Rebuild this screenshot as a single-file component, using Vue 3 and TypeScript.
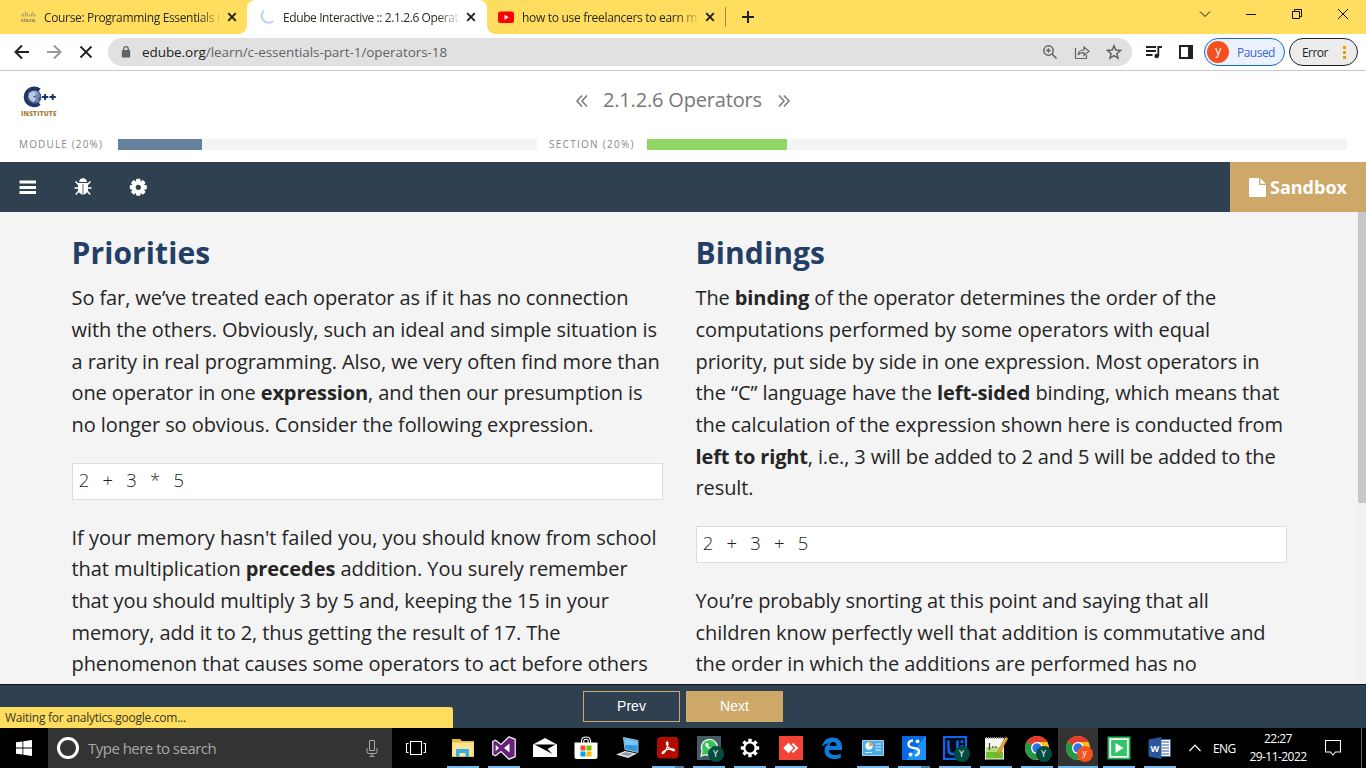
<script setup lang="ts">
interface Part { text: string; bold: boolean }

function parts(line: string): Part[] {
  return line.split('*').map((text, i) => ({ text, bold: i % 2 === 1 }))
}

// A line of body copy and its tracking in pixels
type Line = [string, number]
interface Column { title: string; intro: Line[]; code: string; rest: Line[] }

const columns: Column[] = [
  {
    title: 'Priorities',
    intro: [
      ['So far, we’ve treated each operator as if it has no connection', -0.09],
      ['with the others. Obviously, such an ideal and simple situation is', -0.07],
      ['a rarity in real programming. Also, we very often find more than', -0.072],
      ['one operator in one *expression*, and then our presumption is', -0.105],
      ['no longer so obvious. Consider the following expression.', -0.065],
    ],
    code: '2 + 3 * 5',
    rest: [
      ['If your memory hasn\'t failed you, you should know from school', -0.03],
      ['that multiplication *precedes* addition. You surely remember', -0.065],
      ['that you should multiply 3 by 5 and, keeping the 15 in your', -0.142],
      ['memory, add it to 2, thus getting the result of 17. The', -0.12],
      ['phenomenon that causes some operators to act before others', -0.08],
    ],
  },
  {
    title: 'Bindings',
    intro: [
      ['The *binding* of the operator determines the order of the', -0.105],
      ['computations performed by some operators with equal', -0.06],
      ['priority, put side by side in one expression. Most operators in', -0.103],
      ['the “C” language have the *left-sided* binding, which means that', -0.065],
      ['the calculation of the expression shown here is conducted from', -0.07],
      ['*left to right*, i.e., 3 will be added to 2 and 5 will be added to the', -0.135],
      ['result.', -0.1],
    ],
    code: '2 + 3 + 5',
    rest: [
      ['You’re probably snorting at this point and saying that all', -0.112],
      ['children know perfectly well that addition is commutative and', -0.055],
      ['the order in which the additions are performed has no', -0.105],
    ],
  },
]

interface Tab { id: string; title: string; active?: boolean }
const tabs: Tab[] = [
  { id: 'cisco', title: 'Course: Programming Essentials i' },
  { id: 'spin', title: 'Edube Interactive :: 2.1.2.6 Operat', active: true },
  { id: 'youtube', title: 'how to use freelancers to earn m' },
]

interface TaskApp { id: string; open?: boolean; active?: boolean; stacked?: boolean }
const apps: TaskApp[] = [
  { id: 'explorer', open: true },
  { id: 'vs', open: true },
  { id: 'mail' },
  { id: 'store' },
  { id: 'laptop' },
  { id: 'acrobat', open: true, stacked: true },
  { id: 'whatsapp', open: true },
  { id: 'settings', open: true },
  { id: 'anydesk', open: true },
  { id: 'edge' },
  { id: 'control', open: true },
  { id: 'sync', open: true, stacked: true },
  { id: 'uipath', open: true },
  { id: 'notepad', open: true },
  { id: 'chrome-a', open: true },
  { id: 'chrome-b', open: true, active: true },
  { id: 'player', open: true },
  { id: 'word', open: true },
]
const gearTeeth = [0, 45, 90, 135, 180, 225, 270, 315]
</script>

<template>
  <div class="screen">
    <div class="tabstrip">
      <div v-for="t in tabs" :key="t.id" class="tab" :class="[t.id, { active: t.active }]">
        <svg v-if="t.id === 'cisco'" class="fav" viewBox="0 0 16 16">
          <path d="M1.500 5.500v2M3.500 4v3.500M5.500 2.800v4.700M7.500 4v3.500M9.500 5.500v2M11.500 4v3.500M13.200 2.800v4.700M15 5v2.500" stroke="#b3a36a" stroke-width="1.200" />
          <text x="0.800" y="12.500" class="cisco-name" textLength="14.500">cisco</text>
        </svg>
        <svg v-else-if="t.id === 'spin'" class="fav" viewBox="0 0 16 16">
          <path d="M5 1.500A7 7 0 0 0 14.300 12" fill="none" stroke="#b6d0fa" stroke-width="2" />
        </svg>
        <svg v-else class="fav" viewBox="0 0 16 16">
          <rect y="2.500" width="16" height="11.500" rx="2.500" fill="#f00" />
          <path d="M6.500 5.800v5l4.300-2.500z" fill="#fff" />
        </svg>
        <span class="tab-title">{{ t.title }}</span>
        <svg class="close" viewBox="0 0 10 10"><path d="M1.200 1.200l7.600 7.600M8.800 1.200L1.200 8.800" stroke="#1f1f1f" stroke-width="1.900" /></svg>
      </div>
      <div class="tab-sep"></div>
      <svg class="plus" viewBox="0 0 12 12"><path d="M6 0v12M0 6h12" stroke="#222" stroke-width="2" /></svg>
      <div class="window-buttons">
        <svg viewBox="0 0 12 12"><path d="M1 3.500l5 5 5-5" /></svg>
        <svg viewBox="0 0 12 12"><path d="M1 6.500h10" /></svg>
        <svg viewBox="0 0 12 12"><path d="M1.500 3.500h7v7h-7zM3.500 3.500v-2h7v7h-2" /></svg>
        <svg viewBox="0 0 12 12"><path d="M1 1l10 10M11 1L1 11" /></svg>
      </div>
    </div>

    <div class="toolbar">
      <svg class="nav-ico" viewBox="0 0 16 16"><path d="M15 8H2M8 1.500L1.500 8 8 14.500" stroke="#202124" /></svg>
      <svg class="nav-ico" viewBox="0 0 16 16"><path d="M1 8h13M8 1.500L14.500 8 8 14.500" stroke="#9a9a9c" /></svg>
      <svg class="nav-ico" viewBox="0 0 16 16"><path d="M2.500 2.500l11 11M13.500 2.500l-11 11" stroke="#202124" /></svg>
      <div class="omnibox">
        <svg class="lock" viewBox="0 0 10 12"><rect x="0.800" y="4" width="8.400" height="7.500" rx="1" fill="#5f6368" /><path d="M2.700 4.500V3a2.300 2.300 0 0 1 4.600 0v1.500" fill="none" stroke="#5f6368" stroke-width="1.300" /></svg>
        <span class="url"><b>edube.org</b>/learn/c-essentials-part-1/operators-18</span>
        <svg class="omni-ico" viewBox="0 0 16 16"><circle cx="6.500" cy="6.500" r="4.700" /><path d="M10 10l4.500 4.500M4.300 6.500h4.400M6.500 4.300v4.400" /></svg>
        <svg class="omni-ico" viewBox="0 0 16 16"><path d="M1.500 4v10.500h11V11M4 11c.5-3.500 3-5 6-5V3l5 4.300-5 4.200V8.700C7.500 8.700 5.500 9 4 11z" stroke-width="1.200" /></svg>
        <svg class="omni-ico" viewBox="0 0 16 16"><path d="M8 1.800l1.800 4.300 4.700.4-3.600 3.100 1.100 4.600L8 11.700l-4 2.500 1.100-4.600-3.600-3.100 4.700-.4z" /></svg>
      </div>
      <svg class="music" viewBox="0 0 16 14"><path d="M0 2h10M0 6h10M0 10h6.500M12.300 11V2H16" fill="none" stroke="#202124" stroke-width="1.800" /><circle cx="10.700" cy="11" r="2.300" fill="#202124" /></svg>
      <svg class="panel" viewBox="0 0 14 14"><path d="M0 0h14v14H0z" fill="#202124" /><path d="M2 2h7v10H2z" fill="#fff" /></svg>
      <div class="profile"><span class="avatar">y</span><span>Paused</span></div>
      <div class="error"><span>Error</span><i class="dots"></i></div>
    </div>

    <header class="course-head">
      <svg class="logo" viewBox="0 0 38 34">
        <circle cx="13" cy="12" r="7.500" fill="#45598c" />
        <path d="M8 8l4-2 5 1-2 3.500-3 1 3.500 2-2.500 4-3.500-2-2-3z" fill="#b9c7e0" />
        <path d="M14 5.500l4 2 1 4-2 2 1 3-3 2z" fill="#8a9dc4" opacity=".7" />
        <path d="M18.500 5.200A8.600 8.600 0 1 0 18.500 18.600" fill="none" stroke="#1d3760" stroke-width="3.600" />
        <path d="M21 12h6.300M24.100 9v6M28.500 12h6.300M31.700 9v6" stroke="#1d3760" stroke-width="2" />
        <text x="0" y="31.200" textLength="35.500">INSTITUTE</text>
      </svg>
      <div class="lesson">
        <svg viewBox="0 0 12 12"><path d="M6 .5L1 6l5 5.500M11 .5L6 6l5 5.500" /></svg>
        <span>2.1.2.6 Operators</span>
        <svg viewBox="0 0 12 12"><path d="M1 .5L6 6l-5 5.500M6 .5L11 6l-5 5.500" /></svg>
      </div>
      <div class="progress">
        <span class="plabel">MODULE (20%)</span>
        <div class="track module"><div class="fill"></div></div>
        <span class="plabel second">SECTION (20%)</span>
        <div class="track section"><div class="fill"></div></div>
      </div>
    </header>

    <nav class="course-nav">
      <svg viewBox="0 0 18 18"><path d="M.500 4h16.500M.500 9.500h16.500M.500 14.500h16.500" stroke="#fff" stroke-width="3" /></svg>
      <svg viewBox="0 0 18 18">
        <path d="M5.200 4a3.800 3.800 0 0 1 7.600 0z" fill="#fff" />
        <path d="M4 5h10v6c0 3-2 5.500-5 5.500S4 14 4 11z" fill="#fff" />
        <path d="M4.500 6.500L1.500 3.500M13.500 6.500l3-3M4 10H.500M14 10h3.500M4.800 13l-3 3.500M13.200 13l3 3.500" stroke="#fff" stroke-width="1.500" />
        <path d="M9 6v10" stroke="#2f4050" stroke-width=".8" />
      </svg>
      <svg viewBox="0 0 18 18">
        <g transform="translate(9.300 9.300)" fill="#fff">
          <rect v-for="a in gearTeeth" :key="a" x="-2.200" y="-8.500" width="4.400" height="5" rx="1" :transform="`rotate(${a})`" />
          <circle r="6.400" /><circle r="2.600" fill="#2f4050" />
        </g>
      </svg>
      <button class="sandbox">
        <svg viewBox="0 0 17 19"><path d="M1 0h9v7h7v11a1 1 0 0 1-1 1H1a1 1 0 0 1-1-1V1a1 1 0 0 1 1-1z" fill="#fff" /><path d="M11.300.3V5.700h5.500z" fill="#fff" /></svg>
        <span>Sandbox</span>
      </button>
    </nav>

    <main class="content">
      <div class="columns">
        <article v-for="c in columns" :key="c.title">
          <h1>{{ c.title }}</h1>
          <p>
            <span v-for="l in c.intro" :key="l[0]" class="line" :style="{ letterSpacing: l[1] + 'px' }"><template v-for="(s, i) in parts(l[0])" :key="i"><strong v-if="s.bold">{{ s.text }}</strong><template v-else>{{ s.text }}</template></template></span>
          </p>
          <pre>{{ c.code }}</pre>
          <p>
            <span v-for="l in c.rest" :key="l[0]" class="line" :style="{ letterSpacing: l[1] + 'px' }"><template v-for="(s, i) in parts(l[0])" :key="i"><strong v-if="s.bold">{{ s.text }}</strong><template v-else>{{ s.text }}</template></template></span>
          </p>
        </article>
      </div>
      <div class="scroll"><div class="thumb"></div></div>
    </main>

    <footer class="pager">
      <button class="btn">Prev</button>
      <button class="btn next">Next</button>
      <div class="status">Waiting for analytics.google.com...</div>
    </footer>

    <div class="taskbar">
      <div class="start">
        <svg viewBox="0 0 16 16" fill="#fff"><path d="M0 2.300L6.500 1.400v6.200H0zM7.300 1.200L16 0v7.600H7.300zM0 8.400h6.500v6.200L0 13.700zM7.300 8.400H16V16l-8.700-1.200z" /></svg>
      </div>
      <div class="search">
        <i class="ring"></i>
        <span>Type here to search</span>
        <svg viewBox="0 0 12 17"><path d="M3.500.5h5v10h-5zM1 8v3.500q0 2 2 2h6q2 0 2-2V8M6 13.500v3M3.500 16.300h5" fill="none" stroke="#a8a8a8" /></svg>
      </div>
      <div class="taskview">
        <svg viewBox="0 0 20 14"><path d="M4.500.5h11v13h-11zM2.500 2.500h-2v9h2M17.500 2.500h2v9h-2" fill="none" stroke="#fff" stroke-width="1.100" /></svg>
      </div>
      <div v-for="a in apps" :key="a.id" class="app" :class="{ open: a.open, current: a.active, stacked: a.stacked }">
        <svg viewBox="0 0 24 24">
          <template v-if="a.id === 'explorer'">
            <path d="M1 3h8l2 2h12v16H1z" fill="#e8b941" /><path d="M1 6.500h21.500V20H1z" fill="#ffe594" />
            <path d="M5 21v-7q0-1 1-1h11q1 0 1 1v7h-3.500v-4h-6v4z" fill="#38aee5" />
          </template>
          <template v-else-if="a.id === 'vs'">
            <path d="M17 .8l6.200 2.500v17.400L17 23.200 9 15.500 3.500 19.800.8 18.500v-13l2.700-1.300L9 8.500z" fill="#68217a" stroke="#f0e8f2" stroke-width="1.300" />
            <path d="M17.500 7.500v9L12 12zM3.700 8.700v6.600L7 12z" fill="#fff" />
          </template>
          <template v-else-if="a.id === 'mail'">
            <path d="M0 8.500L12 2l12 6.500V21H0z" fill="#fff" /><path d="M1.500 8.500h21L14.500 13l5 5L1.500 8.500z" fill="#000" />
          </template>
          <template v-else-if="a.id === 'store'">
            <path d="M7.500 7V5q0-4 4.500-4t4.500 4v2M9.800 7V5q0-1.700 2.200-1.700T14.200 5v2" fill="none" stroke="#fff" stroke-width="1.100" />
            <path d="M.500 6.500h23V21q0 2-2 2h-19q-2 0-2-2z" fill="#fff" />
            <path d="M6.500 9.500h5v5h-5z" fill="#f25022" /><path d="M12.500 9.500h5v5h-5z" fill="#7fba00" /><path d="M6.500 15.500h5v5h-5z" fill="#00a4ef" /><path d="M12.500 15.500h5v5h-5z" fill="#ffb900" />
          </template>
          <template v-else-if="a.id === 'laptop'">
            <path d="M8.500 1.500L23 4.500v12L10 13.500z" fill="#2f97dd" stroke="#c4dced" stroke-width=".8" /><path d="M9.500 2.500L22 5.300v4L9.800 9z" fill="#77c6f5" />
            <path d="M1 18.500l9-3.500 12 2.500L13 22z" fill="#dfe4e8" /><path d="M5.500 18.300l5-2 7.500 1.500-5 2.200z" fill="#8b98a3" />
          </template>
          <template v-else-if="a.id === 'acrobat'">
            <rect x="1" y="1" width="21.500" height="21.500" rx="3.500" fill="#b30b00" />
            <path d="M6.500 17.500c-1.500-1 2.500-3.500 5.500-4.200 3-.8 6.500-.5 6.500.9 0 1.500-4.500-.7-6.500-3.200C10.500 9 10 6 11.200 6s.8 3.500-.5 6.300c-1.200 2.700-3 6-4.200 5.200z" fill="none" stroke="#fff" stroke-width="1.300" />
          </template>
          <template v-else-if="a.id === 'whatsapp'">
            <path d="M0 0h24v24H0z" fill="#455a64" /><path d="M4 20l1.200-5A8 8 0 1 1 9 18.700z" fill="#38c455" stroke="#eee" stroke-width="1.300" />
            <path d="M9 7q-2 2 1.500 5t5.500 2l.5-2-2.500-1-1 1-2-2 .8-1L10.500 7z" fill="#fff" />
          </template>
          <template v-else-if="a.id === 'settings'">
            <g transform="translate(12 12)" fill="#fff">
              <rect v-for="d in gearTeeth" :key="d" x="-1.700" y="-9.200" width="3.400" height="4" :transform="`rotate(${d})`" />
              <circle r="5.700" fill="none" stroke="#fff" stroke-width="2.300" />
            </g>
          </template>
          <template v-else-if="a.id === 'anydesk'">
            <path d="M0 0h24v24H0z" fill="#f44336" /><path d="M9.500 6.800l5 5.200-5 5.200L4.300 12zM14 7l5.500 5-5.500 5-1.300-1.300L16.500 12l-3.800-3.700z" fill="#fff" />
          </template>
          <template v-else-if="a.id === 'edge'">
            <path d="M2 11C3 5 7 1.500 12.500 1.500c6 0 9.500 4 9.500 9.500v3H9c0 3.500 2.500 5 6 5 2.500 0 4-.7 5.800-1.600v4C18.800 22.500 17 23 14 23 8 23 4.500 19 4.500 14.500c0-3.500 2-6 4.800-7.300C5.500 7.500 3.500 9 2 11zm7.500-1h7C16.500 7.500 15.500 6 13 6c-2 0-3.200 1.800-3.500 4z" fill="#0e7ada" />
          </template>
          <template v-else-if="a.id === 'control'">
            <path d="M1.500 4.500h21v15h-21z" fill="#4faae2" stroke="#9cd5f5" /><circle cx="8" cy="10" r="3.700" fill="#f4fbff" /><path d="M8 10V6.300A3.700 3.700 0 0 1 11.700 10z" fill="#f3a33a" />
            <path d="M14.500 8h5.500M14.500 11h5.500M14.500 14h5.500M4 16.500h7" stroke="#d3eefb" stroke-width="1.200" />
          </template>
          <template v-else-if="a.id === 'sync'">
            <path d="M0 0h24v24H0z" fill="#0769e2" /><path d="M24 0v24H4z" fill="#1a91f6" />
            <path d="M11 4.500Q6.500 5 6.500 8.300q0 3.200 5 3.700 5.500.500 5.500 3.800 0 3-4 3.700" fill="none" stroke="#fff" stroke-width="2.400" />
            <circle cx="15.500" cy="5.300" r="1.900" fill="#fff" /><circle cx="8.500" cy="18.500" r="1.900" fill="#fff" />
          </template>
          <template v-else-if="a.id === 'uipath'">
            <path d="M1 1h22v22H1z" fill="#050a14" stroke="#0868f2" stroke-width="2.200" /><path d="M5.500 4.500v8.500q0 5 4.500 5t4.500-5V4.500M19 9v10" fill="none" stroke="#0868f2" stroke-width="2.600" /><circle cx="19" cy="5.500" r="1.600" fill="#0868f2" />
          </template>
          <template v-else-if="a.id === 'notepad'">
            <path d="M1 2h19v21.500H1z" fill="#f6f8ef" /><path d="M2 15h17v7.500H2z" fill="#6ebd2d" /><path d="M2 11h17v5H2z" fill="#b4dd77" /><path d="M2 2h17" stroke="#999" stroke-dasharray="1 1" stroke-width="2" />
            <path d="M5.500 7v7M8 11h1.500M11 11h1.500" stroke="#444" stroke-width="1.300" /><path d="M21.500 1l2.500 1.500-8.500 15-2.500 2 .5-3.500z" fill="#eba834" stroke="#a66a16" stroke-width=".6" />
          </template>
          <template v-else-if="a.id === 'chrome-a' || a.id === 'chrome-b'">
            <circle cx="12" cy="12" r="12" fill="#fbc116" /><path d="M12 12L1.600 6A12 12 0 0 1 22.400 6H12z" fill="#e33b2e" /><path d="M12 12L1.600 6A12 12 0 0 0 12 24l5.200-9z" fill="#229a48" /><circle cx="12" cy="12" r="6" fill="#fff" /><circle cx="12" cy="12" r="4.700" fill="#2b73e8" />
          </template>
          <template v-else-if="a.id === 'player'">
            <path d="M.500.500h23v23H.500z" fill="#1eb455" /><path d="M3.200 3.200h17.600v17.600H3.200z" fill="#31c568" stroke="#fff" stroke-width="1.800" /><path d="M8.500 7v10l8-5z" fill="#fff" />
          </template>
          <template v-else>
            <path d="M12 3.500h10.500v17H12z" fill="#fff" stroke="#315b9d" stroke-width=".8" /><path d="M14 6h7M14 9h7M14 12h7M14 15h7M14 18h7" stroke="#315b9d" stroke-width="1.200" /><path d="M.500 3.500l13-2.500v22L.500 20.500z" fill="#29579b" /><text x="2.500" y="15.700" class="word" textLength="9.500">W</text>
          </template>
        </svg>
        <span v-if="['whatsapp', 'uipath', 'chrome-a'].includes(a.id)" class="badge">Y</span>
        <span v-if="a.id === 'chrome-b'" class="badge orange">y</span>
      </div>
      <svg class="chev" viewBox="0 0 12 8"><path d="M.500 7L6 1.200 11.500 7" fill="none" stroke="#fff" stroke-width="1.200" /></svg>
      <span class="lang">ENG</span>
      <div class="clock"><span>22:27</span><span>29-11-2022</span></div>
      <svg class="notice" viewBox="0 0 16 16"><path d="M.500.500h15v11.500H10.500L8 15l-2.500-3H.500z" fill="none" stroke="#fff" stroke-width="1.100" /></svg>
      <i class="peek"></i>
    </div>
  </div>
</template>

<style>
html, body { margin: 0; overflow: hidden; }
</style>

<style scoped>
* { box-sizing: border-box; }
.screen { width: 1366px; height: 768px; display: flex; flex-direction: column; overflow: hidden; background: #fff; font-family: "Open Sans", sans-serif; }
svg { display: block; flex: none; }
button { border: 0; margin: 0; }

.tabstrip { height: 34px; background: #ffdd5f; display: flex; align-items: center; padding-left: 7px; flex: none; }
.tab { width: 240px; height: 34px; display: flex; align-items: center; padding-left: 12px; flex: none; }
.tab.cisco { padding-left: 13px; }
.tab.youtube { padding-left: 11px; }
.tab.active { background: #fff; border-radius: 8px 8px 0 0; position: relative; }
.tab.active::before, .tab.active::after { content: ""; position: absolute; bottom: 0; width: 8px; height: 8px; }
.tab.active::before { left: -8px; background: radial-gradient(circle at 0 0, #ffdd5f 7.500px, #fff 8px); }
.tab.active::after { right: -8px; background: radial-gradient(circle at 100% 0, #ffdd5f 7.500px, #fff 8px); }
.fav { width: 16px; height: 16px; margin-right: 8px; }
.cisco-name { font: bold 6px "Open Sans", sans-serif; fill: #8d835e; }
.tab-title { width: 178px; margin-right: 5px; white-space: nowrap; font-size: 12px; letter-spacing: -0.340px; color: #2b2a22; mask-image: linear-gradient(90deg, #000 155px, transparent 178px); }
.active .tab-title { letter-spacing: -0.400px; }
.youtube .tab-title { letter-spacing: -0.300px; }
.close { width: 10px; height: 10px; }
.tab-sep { width: 1px; height: 20px; background: #9d8a46; margin-left: -2px; }
.plus { width: 12px; height: 12px; margin-left: 16px; }
.window-buttons { margin-left: auto; display: flex; gap: 34px; padding-right: 17px; padding-bottom: 6px; }
.window-buttons svg { width: 12px; height: 12px; fill: none; stroke: #111; stroke-width: 1; }

.toolbar { height: 37px; border-bottom: 1px solid #c9c9c9; display: flex; align-items: center; padding: 0 8px 0 14px; flex: none; font-size: 12px; }
.nav-ico { width: 16px; height: 16px; margin-right: 16px; fill: none; stroke-width: 2; }
.nav-ico:nth-child(3) { margin-right: 14px; stroke-width: 1.800; }
.omnibox { width: 1024px; height: 28px; border-radius: 14px; background: #e1e1e1; display: flex; align-items: center; padding: 0 10px 0 13px; }
.lock { width: 10px; height: 12px; margin-right: 11px; }
.url { font-size: 13.500px; letter-spacing: -0.070px; color: #606366; flex: 1; white-space: nowrap; }
.url b { font-weight: 400; color: #202124; }
.omni-ico { width: 16px; height: 16px; margin-left: 16px; fill: none; stroke: #606366; stroke-width: 1.500; }
.music { width: 16px; height: 14px; margin-left: 14px; }
.panel { width: 14px; height: 14px; margin-left: 17px; }
.profile { width: 81px; height: 28px; margin-left: 11px; border: 1px solid #1967d2; border-radius: 14px; background: #ebf2fb; color: #3b67cf; display: flex; align-items: center; padding-left: 2px; letter-spacing: -0.520px; }
.avatar { width: 22px; height: 22px; border-radius: 50%; background: #f4511e; color: #fff; display: flex; justify-content: center; line-height: 20px; margin-right: 8px; }
.error { width: 69px; height: 28px; margin-left: 4px; border: 1px solid #202124; border-radius: 14px; background: #ececec; color: #202124; display: flex; align-items: center; justify-content: space-between; padding: 0 11px 0 12px; letter-spacing: -0.550px; }
.dots { width: 3px; height: 15px; background: radial-gradient(circle, #f29900 1.500px, transparent 1.800px) 0 0 / 3px 5px; margin-top: 1px; }

.course-head { height: 91px; flex: none; display: grid; grid-template-columns: 560px 1fr; grid-template-rows: 59px 32px; }
.logo { width: 38px; height: 34px; margin: 14px 0 0 21px; }
.logo text { font: 800 6.500px "Open Sans", sans-serif; fill: #a67f3a; }
.lesson { display: flex; align-items: center; padding-left: 16px; color: #777; font-size: 20px; }
.lesson svg { width: 12px; height: 12px; fill: none; stroke: #777; stroke-width: 1.500; margin-top: 1px; }
.lesson span { width: 160px; margin: -2px 15px 0 15px; white-space: nowrap; letter-spacing: -0.170px; }
.progress { grid-column: 1 / 3; display: flex; align-items: flex-start; padding: 9px 0 0 19px; }
.plabel { width: 99px; font-size: 10px; line-height: 11px; letter-spacing: 1.150px; color: #888; white-space: nowrap; }
.plabel.second { width: 98px; margin-left: 12px; letter-spacing: 1.280px; }
.track { height: 11px; background: #f4f4f4; }
.track.module { width: 419px; }
.track.section { width: 700px; }
.fill { width: 20%; height: 11px; background: #64819f; }
.section .fill { background: #8fd662; }

.course-nav { height: 50px; flex: none; background: #2f4050; display: flex; align-items: center; padding-left: 19px; }
.course-nav > svg { width: 18px; height: 18px; margin-right: 37px; }
.sandbox { margin-left: auto; width: 136px; height: 50px; background: #cda869; color: #fff; display: flex; align-items: center; padding: 0 0 0 19px; gap: 4px; font: bold 18px "Open Sans", sans-serif; }
.sandbox svg { width: 17px; height: 19px; }

.content { height: 472px; flex: none; background: #f4f4f4; display: flex; overflow: hidden; }
.columns { display: grid; grid-template-columns: 591px 591px; gap: 33px; padding-left: 72px; width: 1358px; height: 472px; overflow: hidden; }
h1 { margin: 0 0 0 -0.500px; height: 70.300px; padding-top: 21px; font-size: 30px; line-height: 40px; font-weight: 700; letter-spacing: 0.100px; color: #233f66; }
p { margin: 0 0 0 -0.500px; font-size: 20px; line-height: 31.670px; color: #252525; }
.line { display: block; white-space: nowrap; }
pre { margin: 22.350px 0 21.700px; height: 37px; border: 1px solid #ddd; background: #fff; padding: 0 5.700px; font: 300 18.500px/31px "Open Sans", sans-serif; letter-spacing: 1.500px; word-spacing: 5.400px; color: #222; }
.scroll { width: 8px; background: #f1f1f1; }
.thumb { height: 291px; background: #c8c8c8; }

.pager { position: relative; height: 44px; flex: none; background: #2f4050; border-top: 1px solid #10161c; display: flex; justify-content: center; gap: 6px; padding-top: 6px; }
.btn { width: 97px; height: 31px; border: 1px solid #cda869; background: transparent; color: #fff; font: 14px "Liberation Sans", Arial, sans-serif; padding: 0 0 1px; }
.btn.next { background: #cda869; }
.status { position: absolute; left: 0; bottom: 0; width: 453px; height: 21px; border-radius: 0 3px 0 0; background: #ffdd5f; padding-left: 5px; font-size: 12px; line-height: 21px; letter-spacing: -0.260px; color: #3a3627; }

.taskbar { height: 40px; flex: none; background: #000; display: flex; align-items: center; color: #fff; }
.start { width: 48px; display: flex; justify-content: center; }
.start svg { width: 16px; height: 16px; }
.search { width: 344px; height: 40px; background: #333; display: flex; align-items: center; padding: 0 14px 0 9px; color: #a8a8a8; font-size: 15px; letter-spacing: -0.520px; }
.ring { width: 22px; height: 22px; border: 3px solid #fff; border-radius: 50%; margin-right: 9px; }
.search span { flex: 1; }
.search svg { width: 12px; height: 17px; }
.taskview { width: 50px; padding-left: 14px; }
.taskview svg { width: 20px; height: 14px; }
.app { position: relative; width: 41px; height: 40px; flex: none; display: flex; align-items: center; justify-content: center; }
.app > svg { width: 24px; height: 24px; }
.app.open::after { content: ""; position: absolute; left: 5px; bottom: 0; width: 32px; height: 2px; background: #76b9ed; }
.app.stacked::after { background: linear-gradient(90deg, #76b9ed 23px, #4d7ba2 23px); }
.app.current { background: linear-gradient(90deg, transparent 1px, #333 1px); }
.app.current::after { left: 1px; width: 40px; }
.badge { position: absolute; right: 5.500px; bottom: 6px; width: 16px; height: 16px; border-radius: 50%; background: #004d40; color: #fff; font-size: 9px; line-height: 16px; text-align: center; }
.badge.orange { background: #f4511e; line-height: 14px; }
.word { font: bold 9px "Open Sans", sans-serif; fill: #fff; }
.chev { width: 12px; height: 8px; margin-left: 9px; }
.lang { margin-left: 12px; width: 36px; font-size: 12px; letter-spacing: -0.550px; }
.clock { width: 58px; display: flex; flex-direction: column; align-items: center; font-size: 12px; line-height: 18px; letter-spacing: -0.550px; white-space: nowrap; }
.notice { width: 16px; height: 16px; margin-left: 18px; }
.peek { width: 1px; height: 40px; background: #666; margin-left: auto; margin-right: 4px; }
</style>
